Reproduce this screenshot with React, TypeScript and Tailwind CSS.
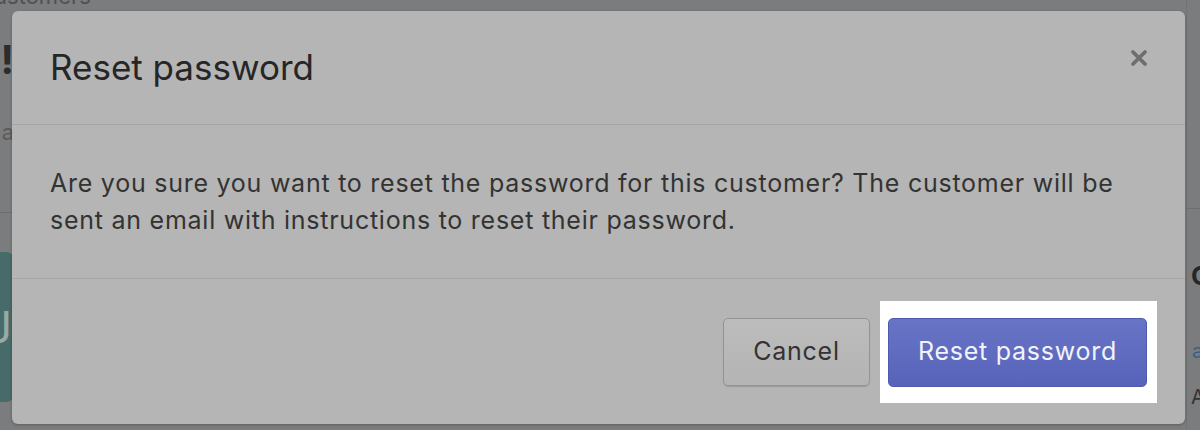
import React from 'react'

const font = { fontFamily: 'Inter, "Noto Sans", sans-serif' }

function CloseIcon() {
    return (
        <svg width="20" height="20" viewBox="0 0 20 20" className="text-[#6e6e6e]">
            <path d="M4 4 L16 16 M16 4 L4 16" stroke="currentColor" strokeWidth="3.8" strokeLinecap="round" />
        </svg>
    )
}

// the customer page that sits under the modal backdrop
function PageBehind() {
    return (
        <div className="absolute inset-0 flex justify-between">
            <div className="flex w-[14px] flex-col items-end whitespace-nowrap">
                <span className="-ml-[22px] -mt-[17px] self-start text-[22px] leading-[26px] text-[#505152]">Customers</span>
                <span className="mt-[29px] text-[40px] font-bold leading-[44px] text-[#2c2c2c]">Hey!</span>
                <span className="mt-[37px] text-[22px] leading-[26px] text-[#5a5b5c]">Reset a</span>
                <div className="mt-[67px] h-px w-[14px] bg-[#6c6d6f]" />
                <div className="mt-[39px] flex h-[150px] w-[150px] items-center justify-end rounded-[8px] bg-[#476b69] pr-[2px] text-[44px] text-[#9aa9a8]">
                    J
                </div>
            </div>
            <div className="flex w-[14px] flex-col items-start whitespace-nowrap border-l border-[#727375] pt-[208px]">
                <div className="h-px w-full bg-[#6c6d6f]" />
                <span className="mt-[52px] pl-[4px] text-[26px] font-bold leading-[30px] text-[#262626]">Customer</span>
                <span className="mt-[48px] pl-[5px] text-[20px] leading-[24px] text-[#3d5f86]">add</span>
                <span className="mt-[22px] pl-[4px] text-[20px] leading-[24px] text-[#333]">Address</span>
            </div>
        </div>
    )
}

export default function App() {
    return (
        <div className="relative h-[430px] w-[1200px] overflow-hidden bg-[#7b7c7e]" style={font}>
            <PageBehind />
            <div className="relative pl-[12px] pt-[11px]">
                <div className="flex h-[413px] w-[1173px] flex-col rounded-[6px] bg-[#b5b5b5] shadow-[0_1px_3px_rgba(0,0,0,0.25)]">
                    <div className="flex h-[114px] items-start justify-between border-b border-[#a6a6a6] pl-[38px] pr-[36px]">
                        <h2 className="mt-[36px] text-[35px] leading-[40px] text-[#262626]">Reset password</h2>
                        <button className="mt-[37px]"><CloseIcon /></button>
                    </div>
                    <div className="flex h-[154px] items-center border-b border-[#a6a6a6] px-[38px]">
                        <p className="text-[25px] leading-[37px] tracking-[0.03em] text-[#333]">
                            Are you sure you want to reset the password for this customer? The customer will be sent an email with instructions to reset their password.
                        </p>
                    </div>
                    <div className="flex flex-1 items-center justify-end pr-[38px]">
                        <button className="h-[68px] w-[147px] rounded-[5px] border border-[#949494] bg-gradient-to-b from-[#bcbcbc] to-[#b4b4b4] text-[25px] tracking-[0.03em] text-[#333] shadow-[0_1px_1px_rgba(0,0,0,0.15)]">
                            Cancel
                        </button>
                        <div className="-mr-[10px] ml-[10px] bg-white pb-[16px] pl-[8px] pr-[10px] pt-[17px]">
                            <button className="h-[69px] w-[259px] rounded-[5px] border border-[#4f5aae] bg-gradient-to-b from-[#6875c6] to-[#5663b9] text-[25px] tracking-[0.03em] text-[#f2f3fa]">
                                Reset password
                            </button>
                        </div>
                    </div>
                </div>
            </div>
        </div>
    )
}
